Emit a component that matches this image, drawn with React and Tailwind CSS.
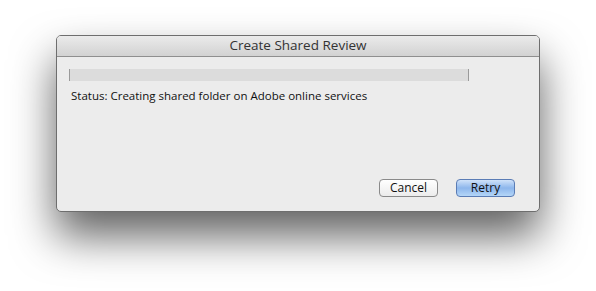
export default function App() {
  const font = { fontFamily: '"Open Sans", "Lucida Grande", sans-serif' };
  return (
    <div className="w-[596px] h-[291px] bg-white overflow-hidden pl-[56px] pt-[35px]" style={font}>
      <div className="w-[484px] h-[177px] flex flex-col rounded-[5px] border border-[#6e6e6e] bg-[#ececec] shadow-[0_24px_44px_rgba(0,0,0,0.62)] overflow-hidden">
        <div className="h-[21px] shrink-0 flex items-center justify-center bg-gradient-to-b from-[#ebebeb] to-[#d2d2d2] border-b border-[#8f8f8f] text-[13.5px] text-[#333] leading-none">
          Create Shared Review
        </div>
        <div className="flex-1 flex flex-col pl-[12px] pr-[24px] pt-[12px] pb-[14px]">
          <div className="w-[400px] h-[12px] bg-[#dcdcdc] border-l border-r border-[#9a9a9a]" />
          <div className="mt-[7px] text-[11.5px] text-[#111] pl-[2px] leading-[16px]">
            Status: Creating shared folder on Adobe online services
          </div>
          <div className="mt-auto flex justify-end gap-[18px]">
            <button className="w-[59px] h-[18px] rounded-[4px] border border-[#8a8a8a] bg-gradient-to-b from-white to-[#ececec] text-[12px] text-[#111] leading-none">
              Cancel
            </button>
            <button className="w-[59px] h-[18px] rounded-[4px] border border-[#5a7cb5] bg-gradient-to-b from-[#d0e2f9] via-[#8db6ec] to-[#b4d6f8] text-[12px] text-[#111] leading-none">
              Retry
            </button>
          </div>
        </div>
      </div>
    </div>
  );
}
